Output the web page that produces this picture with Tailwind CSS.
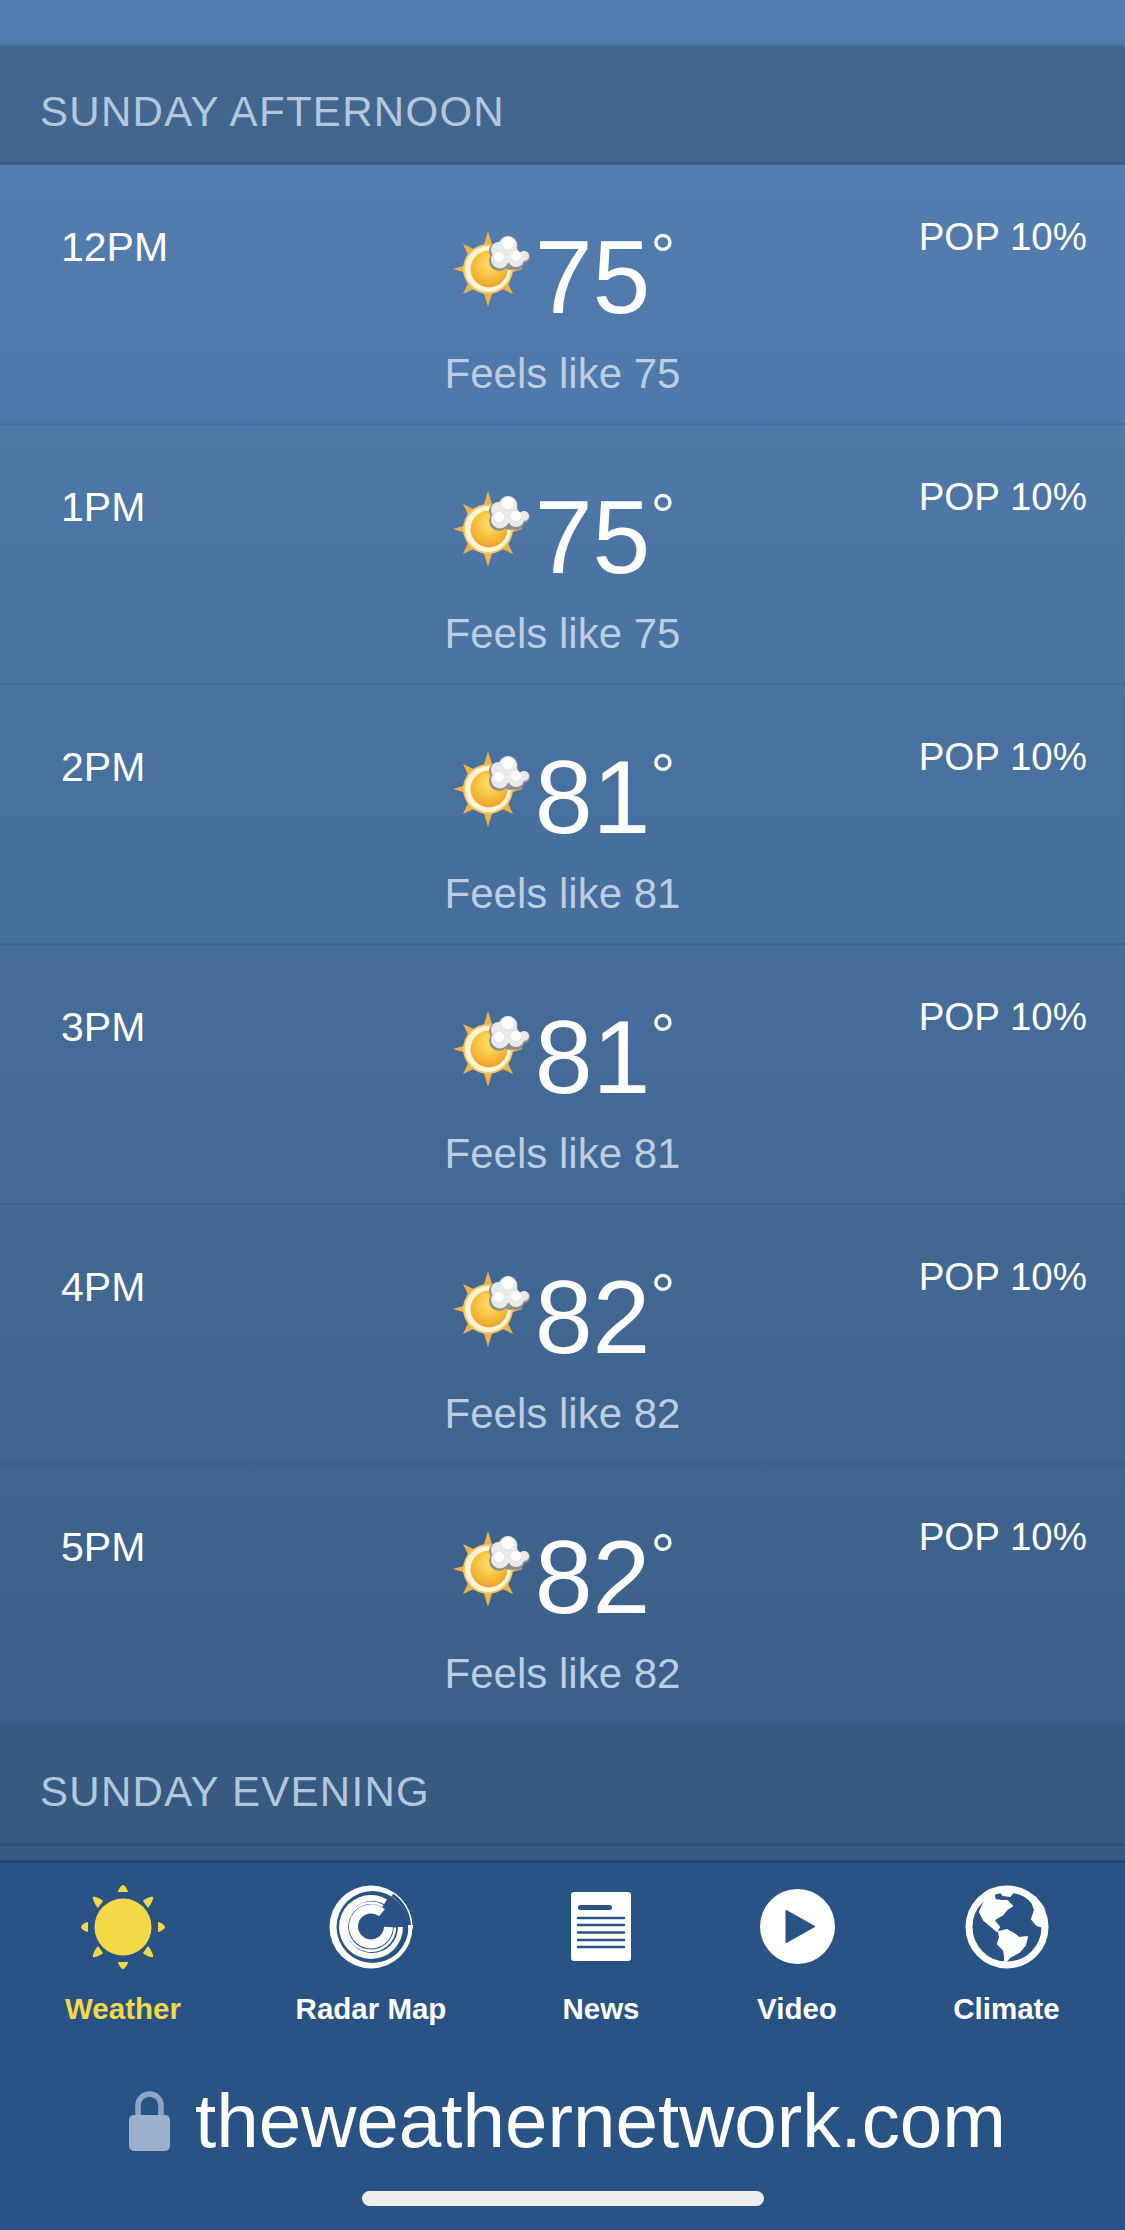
<!DOCTYPE html>
<html lang="en">
<head>
  <meta charset="UTF-8">
  <meta name="viewport" content="width=device-width, initial-scale=1.0">
  <title>The Weather Network</title>
  <script src="https://cdn.jsdelivr.net/npm/@tailwindcss/browser@4"></script>
</head>
<body class="w-[1125px] h-[2230px] overflow-hidden font-['Liberation_Sans',Arial,sans-serif] bg-[#2a5385]">

  <!-- shared weather icon -->
  <svg class="absolute w-0 h-0">
    <defs>
      <radialGradient id="orb" cx="50%" cy="35%" r="65%">
        <stop offset="0%" stop-color="#fde26a"/>
        <stop offset="60%" stop-color="#f7bd3a"/>
        <stop offset="100%" stop-color="#eca22f"/>
      </radialGradient>
      <symbol id="sunCloud" viewBox="0 0 82 82">
        <g fill="#efb04a">
          <path d="M38 1 42.500 16H33.500Z"/><path d="M38 77 42.500 62H33.500Z"/>
          <path d="M3 39 18 34.500V43.500Z"/><path d="M73 39 58 34.500V43.500Z"/>
          <path d="M13 14 28 21 20 29Z"/><path d="M63 64 48 57 56 49Z"/>
          <path d="M13 64 20 49 28 57Z"/><path d="M63 14 56 29 48 21Z"/>
        </g>
        <circle cx="38" cy="39" r="25" fill="#f5c766"/>
        <circle cx="38" cy="39" r="23" fill="#fff6d8"/>
        <circle cx="39" cy="39" r="18.500" fill="url(#orb)"/>
        <!-- cloud: grey underlay, then white puffs nudged up and right -->
        <g fill="#8f8f8f">
          <circle cx="49" cy="31" r="10"/>
          <circle cx="48" cy="21" r="9"/>
          <circle cx="58" cy="16" r="10"/>
          <circle cx="60" cy="31" r="9"/>
          <circle cx="66" cy="31" r="9"/>
          <circle cx="74" cy="27" r="6"/>
        </g>
        <g fill="#e9e9e9">
          <circle cx="50" cy="29.500" r="9"/>
          <circle cx="49" cy="20" r="8"/>
          <circle cx="58" cy="15" r="9"/>
          <circle cx="60" cy="24" r="9"/>
          <circle cx="66" cy="29" r="8"/>
          <circle cx="74" cy="26" r="5"/>
        </g>
        <g fill="#ffffff">
          <circle cx="58" cy="13" r="6"/>
          <circle cx="49" cy="27" r="5"/>
          <circle cx="66" cy="26" r="5"/>
        </g>
      </symbol>
    </defs>
  </svg>

  <!-- Scrolling forecast -->
  <main class="h-[1860px]">
    <div class="h-[46px] bg-[#527daf] border-b-[3px] border-[#4c76a8]"></div>

    <h2 class="h-[119px] pt-[43px] pl-[40px] bg-[#43668f] border-b-[3px] border-[#3d5f87] text-[42px] leading-[46px] tracking-[1.3px] text-[#b4c6dc]">SUNDAY AFTERNOON</h2>

    <div class="bg-gradient-to-b from-[#527daf] to-[#3b5f88]">
      <section class="h-[260px] grid grid-cols-3 border-b-[2px] border-black/[0.06]">
        <div class="pl-[61px] pt-[59px] text-[41px] leading-[46px] text-white">12PM</div>
        <div class="flex flex-col items-center pt-[60px]">
          <div class="flex items-start h-[108px]">
            <svg class="w-[82px] h-[82px] mt-[5px] mr-[3px]"><use href="#sunCloud"/></svg>
            <span class="text-[104px] leading-[104px] text-white">75</span>
            <span class="text-[62px] leading-[62px] text-white">°</span>
          </div>
          <div class="mt-[18px] text-[42px] leading-[46px] text-[#bccde1]">Feels like 75</div>
        </div>
        <div class="pt-[50px] pr-[38px] text-right text-[38.500px] leading-[44px] text-white">POP 10%</div>
      </section>

      <section class="h-[260px] grid grid-cols-3 border-b-[2px] border-black/[0.06]">
        <div class="pl-[61px] pt-[59px] text-[41px] leading-[46px] text-white">1PM</div>
        <div class="flex flex-col items-center pt-[60px]">
          <div class="flex items-start h-[108px]">
            <svg class="w-[82px] h-[82px] mt-[5px] mr-[3px]"><use href="#sunCloud"/></svg>
            <span class="text-[104px] leading-[104px] text-white">75</span>
            <span class="text-[62px] leading-[62px] text-white">°</span>
          </div>
          <div class="mt-[18px] text-[42px] leading-[46px] text-[#bccde1]">Feels like 75</div>
        </div>
        <div class="pt-[50px] pr-[38px] text-right text-[38.500px] leading-[44px] text-white">POP 10%</div>
      </section>

      <section class="h-[260px] grid grid-cols-3 border-b-[2px] border-black/[0.06]">
        <div class="pl-[61px] pt-[59px] text-[41px] leading-[46px] text-white">2PM</div>
        <div class="flex flex-col items-center pt-[60px]">
          <div class="flex items-start h-[108px]">
            <svg class="w-[82px] h-[82px] mt-[5px] mr-[3px]"><use href="#sunCloud"/></svg>
            <span class="text-[104px] leading-[104px] text-white">81</span>
            <span class="text-[62px] leading-[62px] text-white">°</span>
          </div>
          <div class="mt-[18px] text-[42px] leading-[46px] text-[#bccde1]">Feels like 81</div>
        </div>
        <div class="pt-[50px] pr-[38px] text-right text-[38.500px] leading-[44px] text-white">POP 10%</div>
      </section>

      <section class="h-[260px] grid grid-cols-3 border-b-[2px] border-black/[0.06]">
        <div class="pl-[61px] pt-[59px] text-[41px] leading-[46px] text-white">3PM</div>
        <div class="flex flex-col items-center pt-[60px]">
          <div class="flex items-start h-[108px]">
            <svg class="w-[82px] h-[82px] mt-[5px] mr-[3px]"><use href="#sunCloud"/></svg>
            <span class="text-[104px] leading-[104px] text-white">81</span>
            <span class="text-[62px] leading-[62px] text-white">°</span>
          </div>
          <div class="mt-[18px] text-[42px] leading-[46px] text-[#bccde1]">Feels like 81</div>
        </div>
        <div class="pt-[50px] pr-[38px] text-right text-[38.500px] leading-[44px] text-white">POP 10%</div>
      </section>

      <section class="h-[260px] grid grid-cols-3 border-b-[2px] border-black/[0.06]">
        <div class="pl-[61px] pt-[59px] text-[41px] leading-[46px] text-white">4PM</div>
        <div class="flex flex-col items-center pt-[60px]">
          <div class="flex items-start h-[108px]">
            <svg class="w-[82px] h-[82px] mt-[5px] mr-[3px]"><use href="#sunCloud"/></svg>
            <span class="text-[104px] leading-[104px] text-white">82</span>
            <span class="text-[62px] leading-[62px] text-white">°</span>
          </div>
          <div class="mt-[18px] text-[42px] leading-[46px] text-[#bccde1]">Feels like 82</div>
        </div>
        <div class="pt-[50px] pr-[38px] text-right text-[38.500px] leading-[44px] text-white">POP 10%</div>
      </section>

      <section class="h-[258px] grid grid-cols-3">
        <div class="pl-[61px] pt-[59px] text-[41px] leading-[46px] text-white">5PM</div>
        <div class="flex flex-col items-center pt-[60px]">
          <div class="flex items-start h-[108px]">
            <svg class="w-[82px] h-[82px] mt-[5px] mr-[3px]"><use href="#sunCloud"/></svg>
            <span class="text-[104px] leading-[104px] text-white">82</span>
            <span class="text-[62px] leading-[62px] text-white">°</span>
          </div>
          <div class="mt-[18px] text-[42px] leading-[46px] text-[#bccde1]">Feels like 82</div>
        </div>
        <div class="pt-[50px] pr-[38px] text-right text-[38.500px] leading-[44px] text-white">POP 10%</div>
      </section>
    </div>

    <h2 class="h-[123px] pt-[46px] pl-[40px] bg-[#375a80] border-b-[3px] border-[#31527a] text-[42px] leading-[46px] tracking-[1.3px] text-[#b4c6dc]">SUNDAY EVENING</h2>
    <div class="h-[14px] bg-[#375a82]"></div>
  </main>

  <!-- Bottom nav -->
  <nav class="h-[196px] border-t-[3px] border-[#234673] grid grid-cols-[246px_250px_210px_182px_237px] text-[29.500px] leading-[34px] font-bold text-white">
    <a class="flex flex-col items-center text-[#f2da46]">
      <div class="h-[129px] pb-[2px] flex items-center">
        <svg class="w-[86px] h-[86px]" viewBox="0 0 86 86" fill="#f2da46">
          <circle cx="43" cy="43" r="28.500"/>
          <path d="M43 1c2 0 5 5 5 7H38c0-2 3-7 5-7ZM43 85c-2 0-5-5-5-7h10c0 2-3 7-5 7ZM1 43c0-2 5-5 7-5v10c-2 0-7-3-7-5ZM85 43c0 2-5 5-7 5V38c2 0 7 3 7 5Z"/>
          <path d="M13 13c2-1 8 2 10 4l-5 7c-2-2-6-9-5-11ZM73 13c-2-1-8 2-10 4l5 7c2-2 6-9 5-11ZM13 73c2 1 8-2 10-4l-5-7c-2 2-6 9-5 11ZM73 73c-2 1-8-2-10-4l5-7c2 2 6 9 5 11Z"/>
        </svg>
      </div>
      <span>Weather</span>
    </a>
    <a class="flex flex-col items-center">
      <div class="h-[129px] pb-[2px] flex items-center">
        <svg class="w-[100px] h-[100px]" viewBox="0 0 100 100">
          <circle cx="50" cy="50" r="41.500" fill="#fff"/>
          <circle cx="51.500" cy="50" r="36" fill="#2a5385"/>
          <path d="M71.400 18A38.500 38.500 0 0 1 88.500 50" fill="none" stroke="#2a5385" stroke-width="3"/>
          <rect x="87" y="48" width="5" height="3.500" fill="#fff"/>
          <circle cx="50" cy="50" r="32" fill="#fff"/>
          <circle cx="51" cy="50" r="26" fill="#2a5385"/>
          <path d="M64.500 24.900A29 29 0 0 1 79 50" fill="none" stroke="#2a5385" stroke-width="8"/>
          <path d="M62 29A24 24 0 1 0 74 50.500" fill="none" stroke="#fff" stroke-width="2.500"/>
          <path d="M61 35.800A17.500 17.500 0 1 0 67.500 50" fill="none" stroke="#fff" stroke-width="9"/>
        </svg>
      </div>
      <span>Radar Map</span>
    </a>
    <a class="flex flex-col items-center">
      <div class="h-[129px] pb-[2px] flex items-center">
        <svg class="w-[60px] h-[69px]" viewBox="0 0 60 69">
          <rect width="60" height="69" rx="3" fill="#fff"/>
          <rect x="7" y="13" width="34" height="5" rx="2.500" fill="#2a5385"/>
          <path d="M7 26H53M7 33H53M7 40.500H53M7 48H53M7 55H53" stroke="#2a5385" stroke-width="2.500" stroke-linecap="round"/>
        </svg>
      </div>
      <span>News</span>
    </a>
    <a class="flex flex-col items-center">
      <div class="h-[129px] pb-[2px] flex items-center">
        <svg class="w-[75px] h-[75px]" viewBox="0 0 75 75">
          <circle cx="37.500" cy="37.500" r="37.500" fill="#fff"/>
          <path d="M26.500 22 54 37.500 26.500 53Z" fill="#2a5385" stroke="#2a5385" stroke-width="2" stroke-linejoin="round"/>
        </svg>
      </div>
      <span>Video</span>
    </a>
    <a class="flex flex-col items-center">
      <div class="h-[129px] pb-[2px] flex items-center">
        <svg class="w-[100px] h-[100px]" viewBox="0 0 100 100">
          <circle cx="50" cy="50" r="38" fill="none" stroke="#fff" stroke-width="7"/>
          <g fill="#fff" stroke="#fff" stroke-width="2" stroke-linejoin="round">
            <path d="M36 15 38 23 45 24 50 24 55 29 50 32 45 38 38 42 37 44 42 50 40 54 33 48 27 43 23 35 26 28 30 20Z"/>
            <path d="M42 55 50 53 57 57 62 61 70 60 68 68 62 75 53 80 48 85 48 80 47 73 41 67 43 60Z"/>
            <path d="M68 18 75 25 78 33 75 42 80 48 86 50 89 43 86 30 78 20Z"/>
            <path d="M44 15 46 18 53 19 56 15Z"/>
          </g>
        </svg>
      </div>
      <span>Climate</span>
    </a>
  </nav>

  <!-- Safari address bar -->
  <footer class="h-[174px] relative">
    <div class="flex items-center pl-[129px] pt-[25px]">
      <svg class="w-[41px] h-[60px]" viewBox="0 0 41 60">
        <path d="M9 27V14.500a11.500 11.500 0 0 1 23 0V27" fill="none" stroke="#90a5c3" stroke-width="5.500"/>
        <rect y="24" width="41" height="36" rx="5" fill="#9cafcb"/>
      </svg>
      <span class="ml-[25px] text-[76.400px] leading-[80px] text-white">theweathernetwork.com</span>
    </div>
    <div class="absolute left-[362px] top-[135px] w-[402px] h-[15px] rounded-full bg-[#ededed]"></div>
  </footer>

</body>
</html>
